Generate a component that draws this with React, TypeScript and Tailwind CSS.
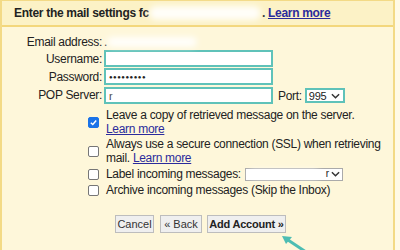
import React from "react";

// Small smudge used where the original screenshot has blurred-out personal data
const Smudge = ({ w, h = 12, className = "" }: { w: number; h?: number; className?: string }) => (
  <span
    className={`inline-block align-middle rounded-full bg-white/90 blur-[3px] ${className}`}
    style={{ width: w, height: h }}
  />
);

const TextInput = ({ children }: { children?: React.ReactNode }) => (
  <div className="h-[17px] w-[169px] border-2 border-[#5fc2b9] bg-white flex items-center px-[3px] text-[11px] overflow-hidden">
    {children}
  </div>
);

const Check = ({ checked = false }: { checked?: boolean }) => (
  <span
    className={`flex h-[11px] w-[11px] shrink-0 items-center justify-center rounded-[2px] border ${
      checked ? "border-[#1a73e8] bg-[#1a73e8]" : "border-[#767676] bg-white"
    }`}
  >
    {checked && (
      <svg viewBox="0 0 10 10" className="h-[9px] w-[9px]">
        <path d="M2 5.2 L4.2 7.3 L8 2.8" fill="none" stroke="white" strokeWidth="1.6" />
      </svg>
    )}
  </span>
);

const Chevron = () => (
  <svg viewBox="0 0 10 6" className="h-[6px] w-[9px]">
    <path d="M1 1 L5 5 L9 1" fill="none" stroke="#333" strokeWidth="1.6" />
  </svg>
);

const LearnMore = ({ bold = false }: { bold?: boolean }) => (
  <span className={`text-[#2b2b9c] underline ${bold ? "font-bold" : ""}`}>Learn more</span>
);

export default function App() {
  return (
    <div className="relative h-[250px] w-[400px] overflow-hidden bg-[#fffae6] font-['Liberation_Sans',Arial,sans-serif] text-[12px] leading-[14px] tracking-[-0.3px] text-[#222]">
      <div className="h-full w-[395px] border-x-2 border-t border-[#f3da86] bg-[#fef7da]">
        {/* title bar */}
        <div className="flex h-[26px] items-center border-b-2 border-[#f3d77c] bg-[#fcf2c6] pl-[12px] font-bold">
          <span>Enter the mail settings fc</span>
          <Smudge w={112} h={14} />
          <span className="ml-[1px]">.&nbsp;</span>
          <LearnMore bold />
        </div>

        {/* account fields */}
        <div className="mt-[8px] grid grid-cols-[100px_auto] items-center gap-x-[2px] gap-y-[1px]">
          <span className="text-right">Email address:</span>
          <span className="flex h-[14px] items-center">
            <span className="text-[#333]">.</span>
            <Smudge w={90} h={10} />
          </span>

          <span className="text-right">Username:</span>
          <TextInput>
            <Smudge w={100} h={9} />
          </TextInput>

          <span className="text-right">Password:</span>
          <TextInput>
            <span className="text-[6px] tracking-[0.5px]">●●●●●●●●●</span>
          </TextInput>

          <span className="text-right">POP Server:</span>
          <div className="mt-[1px] flex items-center">
            <TextInput>
              <span>r</span>
              <Smudge w={110} h={9} />
            </TextInput>
            <span className="ml-[5px]">Port:</span>
            <div className="ml-[3px] flex h-[15px] w-[40px] items-center justify-between border-2 border-[#5fc2b9] bg-white pl-[2px] pr-[3px] text-[11px]">
              <span>995</span>
              <Chevron />
            </div>
          </div>
        </div>

        {/* options */}
        <div className="ml-[86px] mt-[4px] flex flex-col gap-[1px]">
          <div className="flex items-center gap-[7px]">
            <Check checked />
            <div>
              <div>Leave a copy of retrieved message on the server.</div>
              <LearnMore />
            </div>
          </div>
          <div className="flex items-center gap-[7px]">
            <Check />
            <div>
              <div>Always use a secure connection (SSL) when retrieving</div>
              <div>
                mail. <LearnMore />
              </div>
            </div>
          </div>
          <div className="flex h-[16px] items-center gap-[7px]">
            <Check />
            <span>Label incoming messages:</span>
            <div className="-ml-[3px] flex h-[13px] w-[98px] items-center justify-between border border-[#aaa] bg-white pl-[3px] pr-[2px] text-[10px]">
              <Smudge w={70} h={8} />
              <span className="flex items-center gap-[2px]">
                r<Chevron />
              </span>
            </div>
          </div>
          <div className="flex items-center gap-[7px]">
            <Check />
            <span>Archive incoming messages (Skip the Inbox)</span>
          </div>
        </div>

        {/* buttons */}
        <div className="ml-[113px] mt-[18px] flex gap-[5px] whitespace-nowrap text-[11px] tracking-normal">
          <button className="h-[18px] w-[39px] border border-[#bdbdbd] bg-[#efefef] p-0 text-[#333]">Cancel</button>
          <button className="ml-[1px] h-[18px] w-[42px] border border-[#bdbdbd] bg-[#efefef] p-0 text-[#333]">« Back</button>
          <button className="h-[18px] w-[79px] border border-[#bdbdbd] bg-[#efefef] p-0 font-bold tracking-[-0.2px]">Add Account »</button>
        </div>
      </div>

      {/* teal pointer arrow */}
      <svg viewBox="0 0 30 20" className="absolute left-[280px] top-[234px] h-[20px] w-[30px]">
        <path d="M5 4 L26 18" stroke="#4dbdb3" strokeWidth="3" />
        <path d="M2 2 L12 3 L6 10 Z" fill="#4dbdb3" />
      </svg>
    </div>
  );
}
